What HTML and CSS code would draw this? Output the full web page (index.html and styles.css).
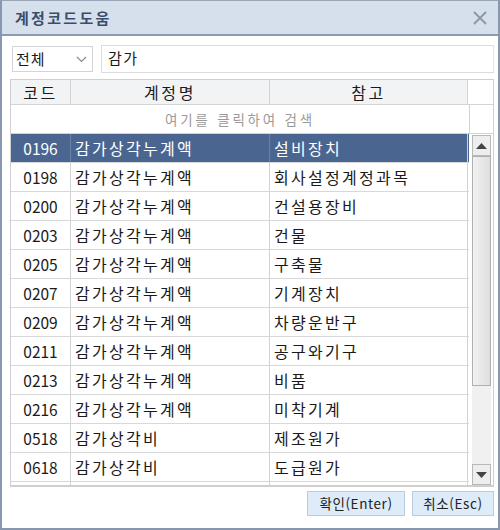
FILE: index.html
```html
<!DOCTYPE html>
<html lang="ko">
<head>
<meta charset="utf-8">
<link rel="stylesheet" href="styles.css">
</head>
<body>
<div class="dialog">
  <div class="titlebar">
    <span class="title">계정코드도움</span>
    <svg class="close" width="16" height="16" viewBox="0 0 16 16"><path d="M2 2 L14 14 M14 2 L2 14" stroke="#8a96a6" stroke-width="1.8" fill="none"/></svg>
  </div>
  <div class="content">
    <div class="toolbar">
      <div class="select"><span>전체</span>
        <svg width="11" height="7" viewBox="0 0 11 7"><path d="M1 1 L5.5 5.5 L10 1" stroke="#8a8a8a" stroke-width="1.2" fill="none"/></svg>
      </div>
      <div class="input">감가</div>
    </div>
    <div class="grid">
      <div class="head">
        <div class="c1">코드</div><div class="c2">계정명</div><div class="c3">참고</div><div class="c4"></div>
      </div>
      <div class="search"><span>여기를 클릭하여 검색</span><div class="c4"></div></div>
      <div class="bodyarea">
        <div class="rows">
          <div class="row sel"><div class="c1">0196</div><div class="c2">감가상각누계액</div><div class="c3">설비장치</div></div>
          <div class="row"><div class="c1">0198</div><div class="c2">감가상각누계액</div><div class="c3">회사설정계정과목</div></div>
          <div class="row"><div class="c1">0200</div><div class="c2">감가상각누계액</div><div class="c3">건설용장비</div></div>
          <div class="row"><div class="c1">0203</div><div class="c2">감가상각누계액</div><div class="c3">건물</div></div>
          <div class="row"><div class="c1">0205</div><div class="c2">감가상각누계액</div><div class="c3">구축물</div></div>
          <div class="row"><div class="c1">0207</div><div class="c2">감가상각누계액</div><div class="c3">기계장치</div></div>
          <div class="row"><div class="c1">0209</div><div class="c2">감가상각누계액</div><div class="c3">차량운반구</div></div>
          <div class="row"><div class="c1">0211</div><div class="c2">감가상각누계액</div><div class="c3">공구와기구</div></div>
          <div class="row"><div class="c1">0213</div><div class="c2">감가상각누계액</div><div class="c3">비품</div></div>
          <div class="row"><div class="c1">0216</div><div class="c2">감가상각누계액</div><div class="c3">미착기계</div></div>
          <div class="row"><div class="c1">0518</div><div class="c2">감가상각비</div><div class="c3">제조원가</div></div>
          <div class="row"><div class="c1">0618</div><div class="c2">감가상각비</div><div class="c3">도급원가</div></div>
          <div class="rowtail"><div class="c1"></div><div class="c2"></div><div class="c3"></div></div>
        </div>
        <div class="scrollbar">
          <div class="sbtn"><svg width="11" height="6" viewBox="0 0 11 6"><path d="M0 6 L5.5 0 L11 6 Z" fill="#444"/></svg></div>
          <div class="thumb"></div>
          <div class="track"></div>
          <div class="sbtn"><svg width="11" height="6" viewBox="0 0 11 6"><path d="M0 0 L5.5 6 L11 0 Z" fill="#444"/></svg></div>
        </div>
      </div>
    </div>
    <div class="buttons">
      <div class="btn ok">확인(Enter)</div>
      <div class="btn cancel">취소(Esc)</div>
    </div>
  </div>
</div>
</body>
</html>
```
FILE: styles.css
```css
html, body {
  margin: 0;
  padding: 0;
  background: #ffffff;
}
body {
  font-family: "Noto Sans CJK KR", "Noto Sans", sans-serif;
  color: #1a1a1a;
}
.dialog {
  width: 500px;
  height: 530px;
  box-sizing: border-box;
  border: 2px solid #8797ad;
  border-top: 1px solid #9aa6b6;
  display: flex;
  flex-direction: column;
  background: #ffffff;
}
.titlebar {
  height: 33px;
  background: #d6e0ec;
  border-bottom: 2px solid #8b9bb1;
  display: flex;
  align-items: center;
  justify-content: space-between;
  padding: 0 10px 0 13px;
  flex: none;
}
.title {
  font-size: 15px;
  font-weight: bold;
  color: #3a4e6c;
  letter-spacing: 2.3px;
}
.content {
  flex: 1;
  display: flex;
  flex-direction: column;
  padding: 8px 4px 0 8px;
}
.toolbar {
  display: flex;
  align-items: center;
  gap: 8px;
  height: 29px;
  padding-left: 2px;
}
.select {
  border: 1px solid #d4d4d4;
  display: flex;
  align-items: center;
  justify-content: space-between;
  padding: 0 5px 0 3px;
  box-sizing: border-box;
  width: 81px;
  height: 26px;
  font-size: 15px;
  letter-spacing: 1px;
}
.select svg {
  margin-top: 2px;
}
.input {
  flex: 1;
  height: 28px;
  box-sizing: border-box;
  border: 1px solid #dcdcdc;
  border-right-color: #e4e4e4;
  padding: 0 6px;
  font-size: 15px;
  letter-spacing: 1.5px;
  line-height: 24px;
}
.grid {
  margin-top: 6px;
  width: 482px;
  border: 1px solid #cfcfcf;
  border-bottom: 2px solid #cfcfcf;
  display: flex;
  flex-direction: column;
  font-size: 16px;
  letter-spacing: 2.3px;
}
.c1 { width: 59px; flex: none; text-align: center; border-right: 1px solid #d3d3d3; letter-spacing: 0px; font-size: 15.5px; }
.c2 { width: 199px; flex: none; border-right: 1px solid #d3d3d3; padding-left: 4px; box-sizing: border-box; }
.c3 { width: 198px; flex: none; border-right: 1px solid #d3d3d3; padding-left: 4px; box-sizing: border-box; }
.c4 { flex: 1; }
.head {
  display: flex;
  height: 24px;
  line-height: 24px;
  background: #f2f3f5;
  border-bottom: 1px solid #d3d3d3;
  font-size: 16px;
  letter-spacing: 2.6px;
}
.head .c1 { letter-spacing: 2.6px; font-size: 16px; }
.head .c2, .head .c3 { text-align: center; padding-left: 0; }
.head .c4 { background: #ffffff; }
.search {
  display: flex;
  height: 28px;
  line-height: 28px;
  border-bottom: 1px solid #d3d3d3;
  color: #9a9a9a;
  font-size: 13.5px;
  letter-spacing: 2.8px;
}
.search span {
  width: 458px;
  text-align: center;
  border-right: 1px solid #d3d3d3;
  flex: none;
}
.bodyarea {
  display: flex;
}
.rows {
  width: 458px;
  flex: none;
  display: flex;
  flex-direction: column;
}
.row {
  display: flex;
  height: 29px;
  line-height: 28px;
  box-sizing: border-box;
  border-bottom: 1px solid #d8d8d8;
}
.row.sel {
  background: #4a6690;
  color: #ffffff;
}
.row.sel .c1, .row.sel .c2 { border-right-color: #6a82a6; }
.rowtail {
  display: flex;
  height: 3px;
}
.scrollbar {
  flex: 1;
  display: flex;
  flex-direction: column;
  padding: 1px 2px 0 3px;
  background: #ffffff;
}
.sbtn {
  height: 19px;
  border: 1px solid #b8b8b8;
  background: #eeeeee;
  display: flex;
  align-items: center;
  justify-content: center;
  flex: none;
}
.thumb {
  height: 228px;
  border: 1px solid #b0b0b0;
  background: linear-gradient(to right, #f2f2f2, #dedede);
  flex: none;
}
.track {
  flex: 1;
  background: #f0f0f0;
}
.buttons {
  display: flex;
  justify-content: flex-end;
  gap: 7px;
  margin-top: 4px;
}
.btn {
  height: 25px;
  box-sizing: border-box;
  border: 1px solid #bccbe0;
  background: #deebf9;
  font-size: 13.5px;
  line-height: 23px;
  padding: 0 5px;
  letter-spacing: 0.6px;
  color: #222;
}
.ok { width: 98px; text-align: center; }
.cancel { width: 82px; text-align: center; }
```
